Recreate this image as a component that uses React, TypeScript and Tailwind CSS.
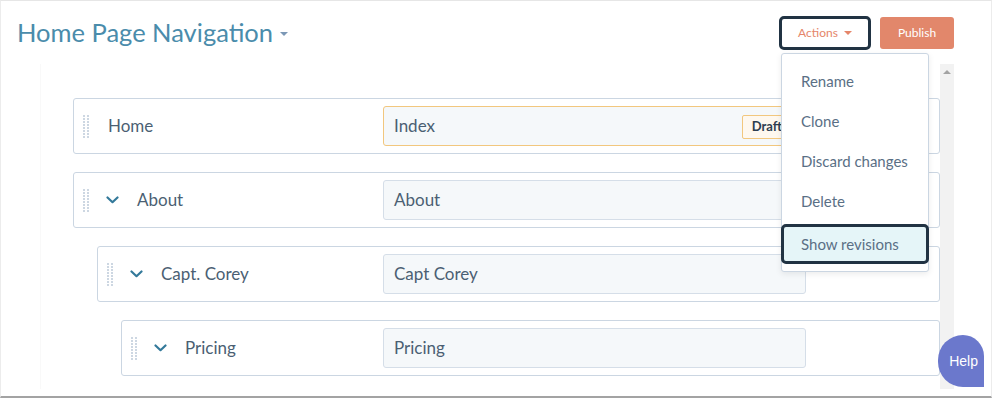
import React from "react";

type NavRow = {
  label: string;
  slug: string;
  level: 0 | 1 | 2;
  hasChildren: boolean;
  draft?: boolean;
};

const rows: NavRow[] = [
  { label: "Home", slug: "Index", level: 0, hasChildren: false, draft: true },
  { label: "About", slug: "About", level: 0, hasChildren: true },
  { label: "Capt. Corey", slug: "Capt Corey", level: 1, hasChildren: true },
  { label: "Pricing", slug: "Pricing", level: 2, hasChildren: true },
];

const indent = ["ml-0", "ml-[24px]", "ml-[48px]"];

function DragHandle() {
  const dots = [];
  for (let r = 0; r < 8; r++) {
    for (let c = 0; c < 2; c++) {
      dots.push(<rect key={`${r}-${c}`} x={c * 4} y={r * 3} width="2" height="2" fill="#cdd7e2" />);
    }
  }
  return (
    <svg width="6" height="23" viewBox="0 0 6 23" className="shrink-0">
      {dots}
    </svg>
  );
}

function Chevron() {
  return (
    <svg width="13" height="8" viewBox="0 0 13 8" className="shrink-0">
      <path d="M1.5 1.5 L6.5 6.2 L11.5 1.5" fill="none" stroke="#33799a" strokeWidth="2.2" strokeLinecap="round" strokeLinejoin="round" />
    </svg>
  );
}

function Row({ row }: { row: NavRow }) {
  return (
    <div
      className={`${indent[row.level]} flex h-[56px] items-center rounded-[3px] border border-[#cbd6e2] bg-white pl-[9px]`}
    >
      <DragHandle />
      {row.hasChildren ? (
        <>
          <div className="ml-[17px]">
            <Chevron />
          </div>
          <span className="ml-[18px] flex-1 text-[17px] text-[#4b5f73]">{row.label}</span>
        </>
      ) : (
        <span className="ml-[19px] flex-1 text-[17px] text-[#4b5f73]">{row.label}</span>
      )}
      <div
        className={`relative mr-[133px] flex h-[40px] w-[423px] items-center rounded-[3px] border bg-[#f5f8fa] pl-[10px] text-[17px] text-[#4b5f73] ${
          row.draft ? "border-[#f2c77e]" : "border-[#d5dee8]"
        }`}
      >
        {row.slug}
        {row.draft && (
          <span className="absolute right-[13px] top-[8px] flex h-[24px] items-center rounded-[2px] border border-[#f2c77e] bg-[#fef8ef] px-[9px] text-[13px] font-bold text-[#2d3e50]">
            Draft
          </span>
        )}
      </div>
    </div>
  );
}

const menuItems = ["Rename", "Clone", "Discard changes", "Delete"];

export default function App() {
  return (
    <div className="relative h-[399px] w-[992px] overflow-hidden bg-white font-['Lato',sans-serif]">
      <div className="h-[398px] border-x border-t border-b-2 border-x-[#ececec] border-t-[#e6e6e6] border-b-[#a3a3a3]">
        {/* Header */}
        <div className="flex h-[63px] items-center justify-between pl-[16px] pr-[37px]">
          <div className="flex items-center">
            <h1 className="text-[25.5px] leading-none text-[#4a8cab]">Home Page Navigation</h1>
            <span className="ml-[7px] mt-[2px] h-0 w-0 border-x-[4px] border-t-[4px] border-x-transparent border-t-[#7c98b6]" />
          </div>
          <div className="flex items-center gap-[9px]">
            <button className="flex h-[34px] w-[92px] items-center justify-center rounded-[5px] border-[3px] border-[#213343] bg-white text-[12px] text-[#e5866a]">
              Actions
              <span className="ml-[6px] h-0 w-0 border-x-[4px] border-t-[4px] border-x-transparent border-t-[#e5866a]" />
            </button>
            <button className="flex h-[32px] w-[74px] items-center justify-center rounded-[3px] bg-[#e2876b] text-[12px] text-white">
              Publish
            </button>
          </div>
        </div>

        {/* Body */}
        <div className="ml-[39px] flex h-[325px]">
          <div className="flex flex-1 flex-col gap-[18px] border-l border-[#f9f9f9] pl-[32px] pt-[34px]">
            {rows.map((row) => (
              <Row key={row.label} row={row} />
            ))}
          </div>
          <div className="flex w-[14px] justify-center bg-[#f2f2f2] pt-[6px]">
            <span className="h-0 w-0 border-x-[4px] border-b-[4px] border-x-transparent border-b-[#a3a3a3]" />
          </div>
          <div className="w-[37px]" />
        </div>
      </div>

      {/* Actions dropdown */}
      <div className="absolute left-[781px] top-[53px] w-[148px] rounded-[3px] border border-[#cbd6e2] bg-white pb-[7px] pt-[7px] shadow-[0_2px_6px_rgba(0,0,0,0.08)]">
        {menuItems.map((item) => (
          <div key={item} className="flex h-[40px] items-center pl-[19px] text-[15px] text-[#5a6f85]">
            {item}
          </div>
        ))}
        <div className="-mx-[1px] mt-[3px] flex h-[40px] items-center rounded-[5px] border-[3px] border-[#213343] bg-[#e5f5f8] pl-[17px] text-[15px] text-[#5a6f85]">
          Show revisions
        </div>
      </div>

      {/* Help bubble */}
      <div className="absolute left-[938px] top-[335px] flex h-[52px] w-[46px] items-center justify-end rounded-bl-[26px] rounded-tl-[26px] rounded-tr-[22px] bg-[#6b78cc] pr-[6px] font-['Liberation_Sans',sans-serif] text-[14px] text-white">
        Help
      </div>
    </div>
  );
}
